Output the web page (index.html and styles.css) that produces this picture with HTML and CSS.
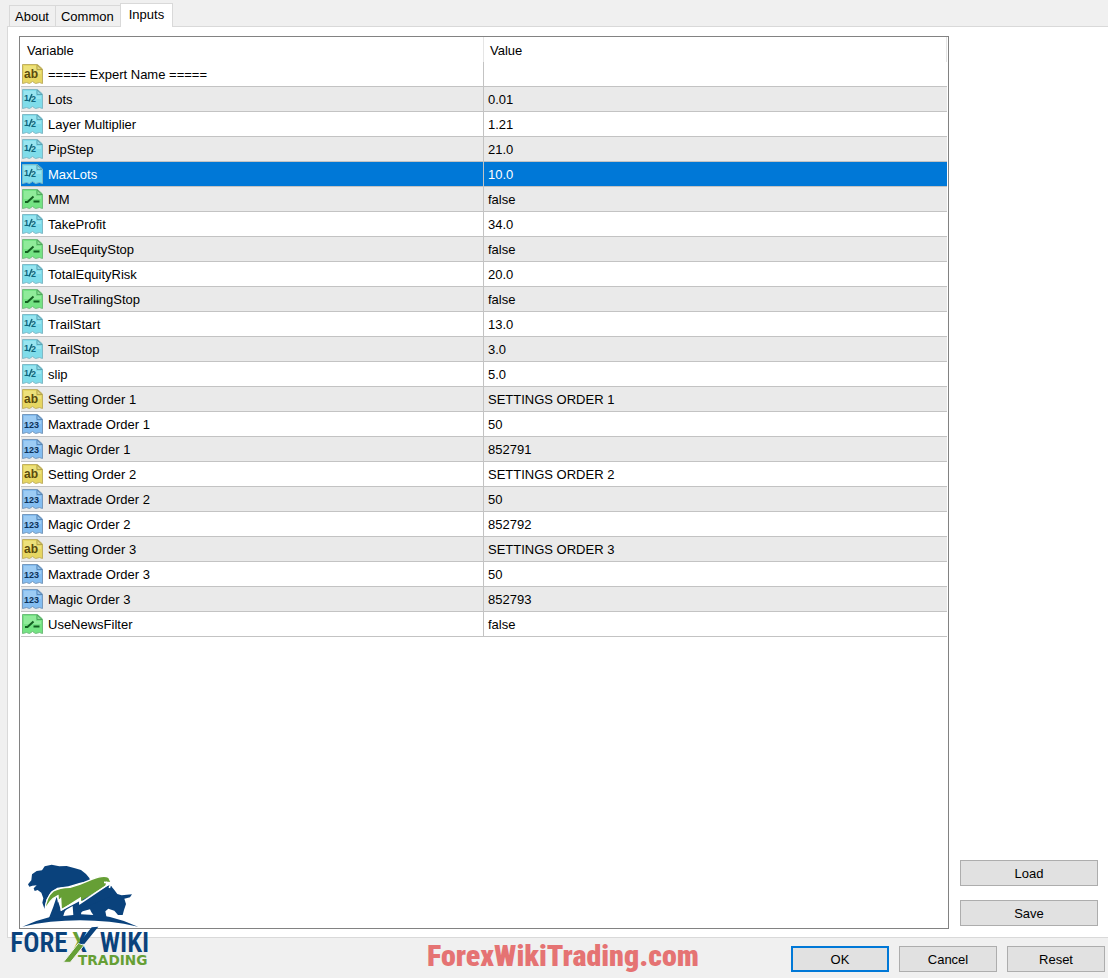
FILE: index.html
```html
<!DOCTYPE html>
<html lang="en">
<head>
  <meta charset="UTF-8" />
  <meta name="viewport" content="width=device-width, initial-scale=1.0"/>
  <title>Expert Inputs</title>
  <link rel="stylesheet" href="styles.css">
</head>
<body>
  <!-- icon sprites -->
  <svg class="sprites" aria-hidden="true">
    <symbol id="icon-ab" viewBox="0 0 21 20">
      <path d="M.5.500h15l5 4.500v14.500l-3-1-4 1-3-2-3 2-3-1-4 1z" fill="#e6d662" stroke="#c0b062"/>
      <path d="M2 2h12v5h5v3H2z" fill="#f1e78c" opacity=".6"/>
      <path d="M15 1v4.500h5z" fill="#e2d57c" stroke="#a99a45" stroke-width=".8"/>
      <text class="icon-text" x="2" y="14" font-size="12" fill="#5a4a0c">ab</text>
    </symbol>
    <symbol id="icon-half" viewBox="0 0 21 20">
      <path d="M.5.500h15l5 4.500v14.500l-3-1-4 1-3-2-3 2-3-1-4 1z" fill="#7fdcea" stroke="#7fb9c6"/>
      <path d="M2 2h12v5h5v3H2z" fill="#a9ebf4" opacity=".6"/>
      <path d="M15 1v4.500h5z" fill="#8fd9e6" stroke="#5499ab" stroke-width=".8"/>
      <text class="icon-text" x="2" y="12" font-size="9" fill="#11667c">1</text>
      <path d="M10 5 7 12.500" stroke="#11667c" stroke-width="1.500"/>
      <text class="icon-text" x="9" y="13" font-size="9" fill="#11667c">2</text>
    </symbol>
    <symbol id="icon-bool" viewBox="0 0 21 20">
      <path d="M.5.500h15l5 4.500v14.500l-3-1-4 1-3-2-3 2-3-1-4 1z" fill="#74e383" stroke="#6fbd7b"/>
      <path d="M2 2h12v5h5v3H2z" fill="#a3f0aa" opacity=".6"/>
      <path d="M15 1v4.500h5z" fill="#88df92" stroke="#479b56" stroke-width=".8"/>
      <path d="M3 13h2.500l6-5.500M11.500 12.500h6" fill="none" stroke="#125f20" stroke-width="2"/>
    </symbol>
    <symbol id="icon-123" viewBox="0 0 21 20">
      <path d="M.5.500h15l5 4.500v14.500l-3-1-4 1-3-2-3 2-3-1-4 1z" fill="#84bdf0" stroke="#7799bd"/>
      <path d="M2 2h12v5h5v3H2z" fill="#add5f7" opacity=".6"/>
      <path d="M15 1v4.500h5z" fill="#94c2ea" stroke="#4f7cab" stroke-width=".8"/>
      <text class="icon-text" x="2" y="14" font-size="9" fill="#0c3158">123</text>
    </symbol>
  </svg>

  <div class="dialog">
    <div class="tabs" role="tablist">
      <button class="tab" role="tab">About</button>
      <button class="tab" role="tab">Common</button>
      <button class="tab active" role="tab" aria-selected="true">Inputs</button>
    </div>

    <div class="panel">
      <div class="list">
        <table class="inputs">
          <thead>
            <tr><th>Variable</th><th>Value</th></tr>
          </thead>
          <tbody>
            <tr><td><svg class="icon"><use href="#icon-ab"/></svg>===== Expert Name =====</td><td></td></tr>
            <tr><td><svg class="icon"><use href="#icon-half"/></svg>Lots</td><td>0.01</td></tr>
            <tr><td><svg class="icon"><use href="#icon-half"/></svg>Layer Multiplier</td><td>1.21</td></tr>
            <tr><td><svg class="icon"><use href="#icon-half"/></svg>PipStep</td><td>21.0</td></tr>
            <tr class="selected"><td><svg class="icon"><use href="#icon-half"/></svg>MaxLots</td><td>10.0</td></tr>
            <tr><td><svg class="icon"><use href="#icon-bool"/></svg>MM</td><td>false</td></tr>
            <tr><td><svg class="icon"><use href="#icon-half"/></svg>TakeProfit</td><td>34.0</td></tr>
            <tr><td><svg class="icon"><use href="#icon-bool"/></svg>UseEquityStop</td><td>false</td></tr>
            <tr><td><svg class="icon"><use href="#icon-half"/></svg>TotalEquityRisk</td><td>20.0</td></tr>
            <tr><td><svg class="icon"><use href="#icon-bool"/></svg>UseTrailingStop</td><td>false</td></tr>
            <tr><td><svg class="icon"><use href="#icon-half"/></svg>TrailStart</td><td>13.0</td></tr>
            <tr><td><svg class="icon"><use href="#icon-half"/></svg>TrailStop</td><td>3.0</td></tr>
            <tr><td><svg class="icon"><use href="#icon-half"/></svg>slip</td><td>5.0</td></tr>
            <tr><td><svg class="icon"><use href="#icon-ab"/></svg>Setting Order 1</td><td>SETTINGS ORDER 1</td></tr>
            <tr><td><svg class="icon"><use href="#icon-123"/></svg>Maxtrade Order 1</td><td>50</td></tr>
            <tr><td><svg class="icon"><use href="#icon-123"/></svg>Magic Order 1</td><td>852791</td></tr>
            <tr><td><svg class="icon"><use href="#icon-ab"/></svg>Setting Order 2</td><td>SETTINGS ORDER 2</td></tr>
            <tr><td><svg class="icon"><use href="#icon-123"/></svg>Maxtrade Order 2</td><td>50</td></tr>
            <tr><td><svg class="icon"><use href="#icon-123"/></svg>Magic Order 2</td><td>852792</td></tr>
            <tr><td><svg class="icon"><use href="#icon-ab"/></svg>Setting Order 3</td><td>SETTINGS ORDER 3</td></tr>
            <tr><td><svg class="icon"><use href="#icon-123"/></svg>Maxtrade Order 3</td><td>50</td></tr>
            <tr><td><svg class="icon"><use href="#icon-123"/></svg>Magic Order 3</td><td>852793</td></tr>
            <tr><td><svg class="icon"><use href="#icon-bool"/></svg>UseNewsFilter</td><td>false</td></tr>
          </tbody>
        </table>
      </div>
      <div class="side">
        <button class="btn">Load</button>
        <button class="btn">Save</button>
      </div>
    </div>

    <div class="footer">
      <button class="btn primary">OK</button>
      <button class="btn">Cancel</button>
      <button class="btn">Reset</button>
    </div>

    <!-- site branding over the dialog -->
    <svg class="logo" viewBox="24 36 432 318" role="img" aria-label="Forex Wiki Trading">
      <defs>
        <linearGradient id="x-fill" x1="0" y1="0" x2="1" y2="0">
          <stop offset=".5" stop-color="#669f35"/>
          <stop offset=".5" stop-color="#0a427c"/>
        </linearGradient>
      </defs>
      <path fill="#0a427c" d="M84 103 94 91 96 73 110 63 126 61 134 49 155 44 178 49 200 48 225 55 243 60 258 72 268 84 271 93 240 98 205 109 172 113 153 125 139 150 134 178 127 158 130 145 124 128 113 120 104 123 101 115 110 106 97 107 88 110z"/>
      <path fill="#0a427c" d="M67 230Q150 192 240 190 330 192 414 230 330 211 240 211 150 211 67 230z"/>
      <path fill="#0a427c" d="M146 206 160 170 170 140 182 178 238 150 330 104 343 120 352 132 365 136 396 133 390 142 373 146 378 162 372 180 368 195 354 195 343 182 325 176 316 184 320 204 240 200z"/>
      <path fill="#fff" d="M190 198Q194 180 201 178L218 168 220 195zM243 193Q242 187 248 184L270 178Q273 187 280 195z"/>
      <path fill="#669f35" stroke="#fff" stroke-width="4" d="M134 184Q138 140 160 123 178 113 210 112 242 103 275 88 310 74 326 82L336 103 320 97 318 109 240 158 241 144 184 180 182 146 175 153 174 137Q147 149 134 184z"/>
      <path fill="#0a427c" d="M246 150 322 108 336 110 330 140 260 170z"/>
      <path fill="none" stroke="#fff" stroke-width="5" d="M182 181 240 150 240 160 324 104M312 97 333 98 328 114"/>
      <text class="logo-name" x="31" y="306">FORE</text>
      <text class="logo-name" x="216" y="306" fill="url(#x-fill)">X</text>
      <path fill="#669f35" stroke="#efefef" stroke-width="3" d="M190 337 235 280 252 286 211 337z"/>
      <path fill="#0a427c" d="M236 280 275 232 295 230 253 282z"/>
      <text class="logo-name" x="299" y="306">WIKI</text>
      <text class="logo-sub" x="234" y="345">TRADING</text>
    </svg>
    <div class="watermark">ForexWikiTrading.com</div>
  </div>
</body>
</html>
```
FILE: styles.css
```css
* {
  margin: 0;
  padding: 0;
  box-sizing: border-box;
}
body {
  background-color: #f0f0f0;
  color: #000;
  font-family: "Liberation Sans", Arial, sans-serif;
  font-size: 13px;
}
button {
  font: inherit;
  color: inherit;
}
.sprites {
  position: absolute;
  width: 0;
  height: 0;
}
.dialog {
  position: relative;
  display: flex;
  flex-direction: column;
  min-height: 100vh;
}
.tabs {
  display: flex;
  align-items: flex-end;
  padding: 3px 0 0 9px;
}
.tab {
  height: 21px;
  padding: 0 6px 0 5px;
  background: #f0f0f0;
  border: 1px solid #d9d9d9;
  border-width: 1px 0 0 1px;
}
.tab.active {
  height: 24px;
  margin-bottom: -1px;
  padding: 0 8px 2px;
  background: #fff;
  border-width: 1px 1px 0;
  z-index: 1;
}
.panel {
  flex: 1;
  display: flex;
  gap: 11px;
  margin-left: 7px;
  padding: 9px 10px 8px 11px;
  background: #fff;
  border: 1px solid #d9d9d9;
  border-right: none;
}
.list {
  flex: 1;
  padding: 0 1px;
  border: 1px solid #828282;
}
.inputs {
  width: 100%;
  table-layout: fixed;
  border-spacing: 0;
}
.inputs th,
.inputs td {
  height: 25px;
  text-align: left;
  vertical-align: middle;
  white-space: nowrap;
}
.inputs th {
  padding: 2px 6px 0;
  font-weight: normal;
  border-right: 1px solid #e5e5e5;
}
.inputs td {
  padding: 0 4px;
  border-bottom: 1px solid #c3c3c3;
}
.inputs td:first-child {
  padding: 0 1px;
  border-right: 1px solid #c3c3c3;
}
.inputs tbody tr:nth-child(even) {
  background: #eaeaea;
}
.inputs tbody tr.selected {
  background: #0078d7;
  color: #fff;
}
.icon {
  width: 21px;
  height: 20px;
  margin-right: 5px;
  vertical-align: -5px;
}
.icon-text {
  font-family: "Liberation Sans", Arial, sans-serif;
  font-weight: bold;
}
.side {
  display: flex;
  flex-direction: column;
  justify-content: flex-end;
  gap: 14px;
  width: 138px;
  padding-bottom: 3px;
}
.btn {
  height: 26px;
  background: #e1e1e1;
  border: 1px solid #adadad;
}
.btn.primary {
  border: 2px solid #0078d7;
}
.footer {
  display: flex;
  justify-content: flex-end;
  gap: 10px;
  padding: 8px 3px 6px;
}
.footer .btn {
  width: 98px;
}
.logo {
  position: absolute;
  left: 8px;
  bottom: 10px;
  width: 144px;
  height: 106px;
}
.logo-name {
  font-family: "Roboto Condensed", Roboto, sans-serif;
  font-size: 81px;
  font-weight: 600;
}
.logo-name:not([fill]) {
  fill: #0a427c;
}
.logo-sub {
  font-family: "DejaVu Sans", sans-serif;
  font-size: 41px;
  font-weight: bold;
  fill: #669f35;
}
.watermark {
  position: absolute;
  left: 0;
  right: 0;
  bottom: 4px;
  padding-left: 18px;
  text-align: center;
  font-family: Impact, "Roboto Condensed", Roboto, sans-serif;
  font-size: 30px;
  line-height: 36px;
  font-weight: 900;
  color: #e57373;
  pointer-events: none;
}
```
